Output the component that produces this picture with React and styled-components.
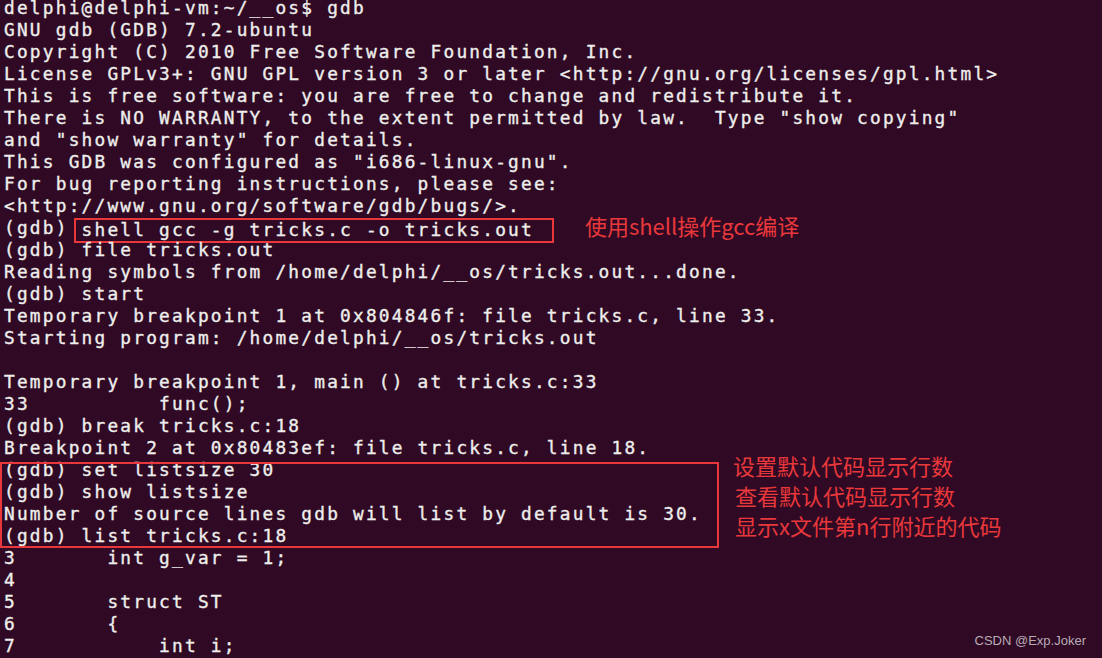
import React from 'react';
import styled, { createGlobalStyle } from 'styled-components';

const GlobalStyle = createGlobalStyle`
    html, body {
        margin: 0;
        padding: 0;
        background: #300a24;
    }
`;

const topLines = [
    'delphi@delphi-vm:~/__os$ gdb',
    'GNU gdb (GDB) 7.2-ubuntu',
    'Copyright (C) 2010 Free Software Foundation, Inc.',
    'License GPLv3+: GNU GPL version 3 or later <http://gnu.org/licenses/gpl.html>',
    'This is free software: you are free to change and redistribute it.',
    'There is NO WARRANTY, to the extent permitted by law.  Type "show copying"',
    'and "show warranty" for details.',
    'This GDB was configured as "i686-linux-gnu".',
    'For bug reporting instructions, please see:',
    '<http://www.gnu.org/software/gdb/bugs/>.',
];

const midLines = [
    '(gdb) file tricks.out',
    'Reading symbols from /home/delphi/__os/tricks.out...done.',
    '(gdb) start',
    'Temporary breakpoint 1 at 0x804846f: file tricks.c, line 33.',
    'Starting program: /home/delphi/__os/tricks.out',
    '',
    'Temporary breakpoint 1, main () at tricks.c:33',
    '33          func();',
    '(gdb) break tricks.c:18',
    'Breakpoint 2 at 0x80483ef: file tricks.c, line 18.',
];

const framedLines = [
    '(gdb) set listsize 30',
    '(gdb) show listsize',
    'Number of source lines gdb will list by default is 30.',
    '(gdb) list tricks.c:18',
];

const notes = [
    '设置默认代码显示行数',
    '查看默认代码显示行数',
    '显示x文件第n行附近的代码',
];

const bottomLines = [
    '3       int g_var = 1;',
    '4',
    '5       struct ST',
    '6       {',
    '7           int i;',
];

function App() {
    return (
        <Screen>
            <GlobalStyle />
            <Terminal>
                {topLines.map((l, i) => <Line key={'t' + i}>{l}</Line>)}
                <Line>
                    (gdb) <Boxed>shell gcc -g tricks.c -o tricks.out</Boxed>
                    <Note>使用shell操作gcc编译</Note>
                </Line>
                {midLines.map((l, i) => <Line key={'m' + i}>{l}</Line>)}
                <Annotated>
                    <Framed>
                        {framedLines.map((l, i) => <Line key={'f' + i}>{l}</Line>)}
                    </Framed>
                    <Notes>
                        {notes.map((n, i) => <NoteRow key={n} $shift={i > 0}>{n}</NoteRow>)}
                    </Notes>
                </Annotated>
                {bottomLines.map((l, i) => <Line key={'b' + i}>{l}</Line>)}
            </Terminal>
            <Watermark>CSDN @Exp.Joker</Watermark>
        </Screen>
    );
}

const red = '#e8383b';

const Screen = styled.div`
    position: relative;
    width: 100%;
    height: 100vh;
    overflow: hidden;
    background: #300a24;
`;

const Terminal = styled.div`
    margin-top: -3px;
    padding-left: 4px;
    font-family: "DejaVu Sans Mono", monospace;
    font-size: 17.8px;
    letter-spacing: 2.22px;
    -webkit-text-stroke: 0.35px #eeeeec;
    color: #eeeeec;
`;

const Line = styled.div`
    display: flex;
    align-items: flex-start;
    height: 22px;
    line-height: 22px;
    white-space: pre;
`;

const Boxed = styled.span`
    display: inline-block;
    margin: 1px 0 0 -8px;
    height: 25px;
    line-height: 20px;
    padding: 0 18px 0 6px;
    border: 2px solid ${red};
    box-sizing: border-box;
`;

const Note = styled.span`
    margin: -3px 0 0 31px;
    font-family: "Noto Sans CJK SC", sans-serif;
    font-size: 22px;
    line-height: 22px;
    letter-spacing: 0;
    -webkit-text-stroke: 0;
    color: ${red};
`;

const Annotated = styled.div`
    display: flex;
    align-items: flex-start;
`;

const Framed = styled.div`
    position: relative;
    width: 719px;
    margin-left: -4px;
    padding-left: 4px;
    box-sizing: border-box;

    &::after {
        content: "";
        position: absolute;
        top: 3px;
        bottom: -1px;
        left: 0;
        right: 0;
        border: 2px solid ${red};
    }
`;

const Notes = styled.div`
    display: flex;
    flex-direction: column;
    margin: -9px 0 0 14px;
`;

const NoteRow = styled.div`
    font-family: "Noto Sans CJK SC", sans-serif;
    font-size: 22px;
    line-height: 30px;
    letter-spacing: 0;
    -webkit-text-stroke: 0;
    white-space: nowrap;
    color: ${red};
    padding-left: ${p => (p.$shift ? '2px' : '0')};
`;

const Watermark = styled.div`
    position: absolute;
    right: 16px;
    bottom: 10px;
    font-family: "Liberation Sans", Arial, sans-serif;
    font-size: 13px;
    color: #b9abb6;
`;

export default App;
